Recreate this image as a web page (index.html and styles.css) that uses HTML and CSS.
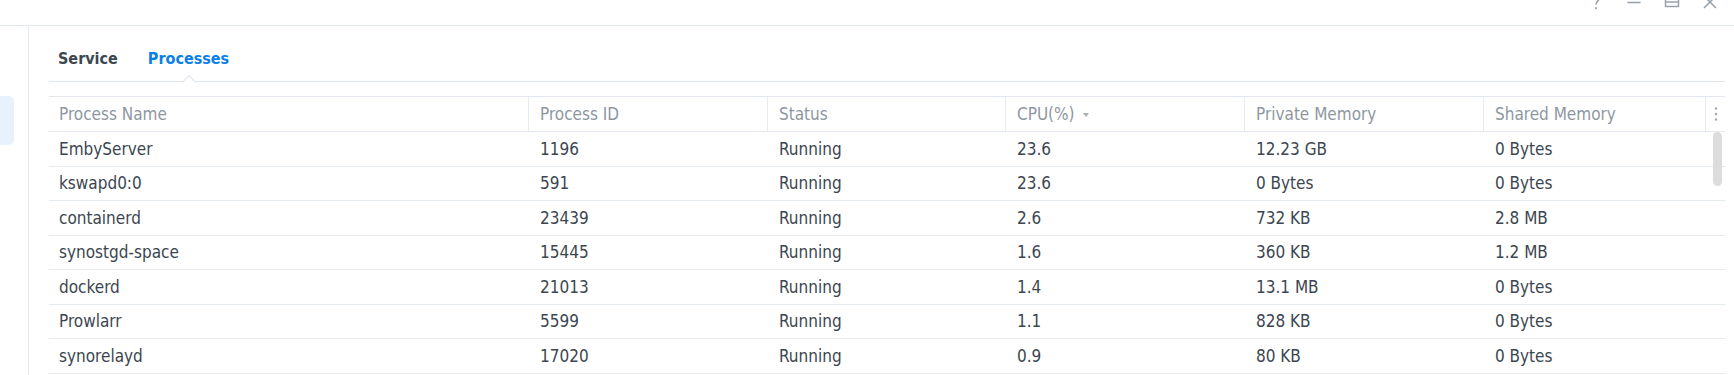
FILE: index.html
```html
<!DOCTYPE html>
<html lang="en">
<head>
    <meta charset="UTF-8">
    <meta name="viewport" content="width=device-width, initial-scale=1.0">
    <title>Resource Monitor - Processes</title>
    <link rel="stylesheet" href="styles.css">
</head>
<body>
    <div class="window">
        <div class="titlebar">
            <div class="win-buttons">
                <svg class="win-btn" viewBox="0 0 16 16" width="16" height="16">
                    <path d="M4.5 -2.5 C4.5 -5.5 11.5 -5.5 11.5 -2 C11.5 0.5 8 1 8 4.5" fill="none" stroke="#9aa3ad" stroke-width="1.6"/>
                    <circle cx="8" cy="8.2" r="1.1" fill="#9aa3ad"/>
                </svg>
                <svg class="win-btn" viewBox="0 0 16 16" width="16" height="16">
                    <path d="M1.5 2.5 H14.5" stroke="#9aa3ad" stroke-width="1.6"/>
                </svg>
                <svg class="win-btn" viewBox="0 0 16 16" width="16" height="16">
                    <rect x="1.5" y="-5" width="13" height="11.5" fill="none" stroke="#9aa3ad" stroke-width="1.5"/>
                    <path d="M1.5 2 H14.5" stroke="#9aa3ad" stroke-width="1.5"/>
                </svg>
                <svg class="win-btn" viewBox="0 0 16 16" width="16" height="16">
                    <path d="M2 -4 L14 8 M14 -4 L2 8" stroke="#9aa3ad" stroke-width="1.6"/>
                </svg>
            </div>
        </div>

        <div class="main">
            <aside class="sidebar">
                <div class="side-item"></div>
            </aside>

            <section class="content">
                <nav class="tabs">
                    <span class="tab">Service</span>
                    <span class="tab active">Processes</span>
                </nav>

                <div class="grid">
                    <div class="grid-row grid-head">
                        <div class="cell">Process Name</div>
                        <div class="cell">Process ID</div>
                        <div class="cell">Status</div>
                        <div class="cell">CPU(%)<span class="sort-caret"></span></div>
                        <div class="cell">Private Memory</div>
                        <div class="cell">Shared Memory</div>
                        <div class="cell cell-menu">
                            <svg viewBox="0 0 4 16" width="4" height="16">
                                <circle cx="2" cy="2.5" r="1.2" fill="#a0a8b0"/>
                                <circle cx="2" cy="8" r="1.2" fill="#a0a8b0"/>
                                <circle cx="2" cy="13.5" r="1.2" fill="#a0a8b0"/>
                            </svg>
                        </div>
                    </div>
                    <div id="rows"></div>
                    <div class="scroll-thumb"></div>
                </div>
            </section>
        </div>
    </div>

    <script>
        const processes = [
            { name: 'EmbyServer', pid: 1196, status: 'Running', cpu: '23.6', priv: '12.23 GB', shared: '0 Bytes' },
            { name: 'kswapd0:0', pid: 591, status: 'Running', cpu: '23.6', priv: '0 Bytes', shared: '0 Bytes' },
            { name: 'containerd', pid: 23439, status: 'Running', cpu: '2.6', priv: '732 KB', shared: '2.8 MB' },
            { name: 'synostgd-space', pid: 15445, status: 'Running', cpu: '1.6', priv: '360 KB', shared: '1.2 MB' },
            { name: 'dockerd', pid: 21013, status: 'Running', cpu: '1.4', priv: '13.1 MB', shared: '0 Bytes' },
            { name: 'Prowlarr', pid: 5599, status: 'Running', cpu: '1.1', priv: '828 KB', shared: '0 Bytes' },
            { name: 'synorelayd', pid: 17020, status: 'Running', cpu: '0.9', priv: '80 KB', shared: '0 Bytes' }
        ];

        const rows = document.getElementById('rows');
        processes.forEach(p => {
            const row = document.createElement('div');
            row.className = 'grid-row';
            row.innerHTML = `
                <div class="cell">${p.name}</div>
                <div class="cell">${p.pid}</div>
                <div class="cell">${p.status}</div>
                <div class="cell">${p.cpu}</div>
                <div class="cell">${p.priv}</div>
                <div class="cell">${p.shared}</div>
                <div class="cell"></div>
            `;
            rows.appendChild(row);
        });
    </script>
</body>
</html>
```

FILE: styles.css
```css
body {
    margin: 0;
    background: #fff;
    font-family: "DejaVu Sans Condensed", "DejaVu Sans", sans-serif;
    color: #3c4650;
    overflow: hidden;
}

.window {
    width: 1734px;
    height: 375px;
    overflow: hidden;
}

.titlebar {
    height: 25px;
    border-bottom: 1px solid #e3e8ee;
    display: flex;
    justify-content: flex-end;
    align-items: flex-start;
    padding-right: 16px;
}

.win-buttons {
    display: flex;
    gap: 22px;
}

.win-btn {
    display: block;
    overflow: visible;
}

.main {
    display: flex;
    height: 349px;
}

.sidebar {
    width: 28px;
    border-right: 1px solid #e3e8ee;
    flex-shrink: 0;
}

.side-item {
    margin-top: 70px;
    width: 14px;
    height: 49px;
    background: #e7f2fd;
    border-radius: 0 5px 5px 0;
}

.content {
    flex: 1;
    padding: 0 9px 0 20px;
}

.tabs {
    display: flex;
    gap: 30px;
    padding-left: 9px;
    border-bottom: 1px solid #dfe5ec;
}

.tab {
    position: relative;
    padding: 24px 0 13px;
    line-height: 18px;
    font-size: 16px;
    font-weight: bold;
    color: #3d4752;
}

.tab.active {
    color: #0a80e6;
}

.tab.active::after {
    content: "";
    position: absolute;
    left: 50%;
    bottom: -5.5px;
    width: 10px;
    height: 10px;
    margin-left: -5px;
    background: #fff;
    border-top: 1px solid #dfe5ec;
    border-left: 1px solid #dfe5ec;
    transform: rotate(45deg);
    box-sizing: border-box;
}

.grid {
    position: relative;
    margin-top: 14px;
    font-size: 17px;
}

.grid-row {
    display: grid;
    grid-template-columns: 479px 239px 238px 239px 239px 222px 20px;
    height: 34.5px;
    border-bottom: 1px solid #e6ebf0;
    box-sizing: border-box;
}

.grid-head {
    height: 36px;
    border-top: 1px solid #e3e8ee;
    border-bottom: 1px solid #e3e8ee;
    color: #8e979f;
}

.cell {
    display: flex;
    align-items: center;
    padding-left: 12px;
    white-space: nowrap;
    overflow: hidden;
}

.cell:first-child {
    padding-left: 10px;
}

.grid-head .cell {
    padding-left: 11px;
}

.grid-head .cell:first-child {
    padding-left: 10px;
}

.grid-head .cell + .cell {
    border-left: 1px solid #e6ebf0;
}

.grid-head .cell-menu {
    padding: 0;
    justify-content: center;
}

.sort-caret {
    display: inline-block;
    margin-left: 8px;
    margin-top: 1px;
    border-left: 3px solid transparent;
    border-right: 3px solid transparent;
    border-top: 4px solid #a5adb5;
}

.scroll-thumb {
    position: absolute;
    top: 36px;
    right: 3px;
    width: 9px;
    height: 54px;
    border-radius: 5px;
    background: #dcdcdc;
}
```
